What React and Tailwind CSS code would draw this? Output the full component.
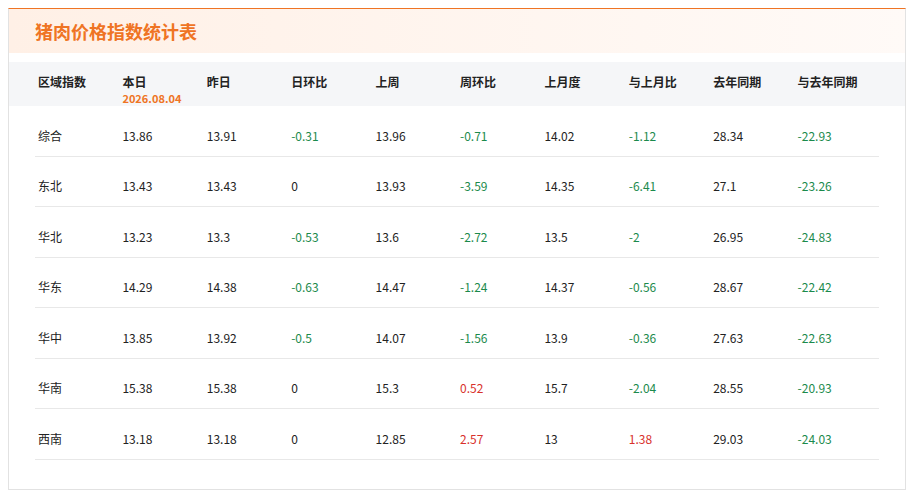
import React from 'react';

const cols = ['区域指数', '本日', '昨日', '日环比', '上周', '周环比', '上月度', '与上月比', '去年同期', '与去年同期'];

const rows = [
  ['综合', '13.86', '13.91', '-0.31', '13.96', '-0.71', '14.02', '-1.12', '28.34', '-22.93'],
  ['东北', '13.43', '13.43', '0', '13.93', '-3.59', '14.35', '-6.41', '27.1', '-23.26'],
  ['华北', '13.23', '13.3', '-0.53', '13.6', '-2.72', '13.5', '-2', '26.95', '-24.83'],
  ['华东', '14.29', '14.38', '-0.63', '14.47', '-1.24', '14.37', '-0.56', '28.67', '-22.42'],
  ['华中', '13.85', '13.92', '-0.5', '14.07', '-1.56', '13.9', '-0.36', '27.63', '-22.63'],
  ['华南', '15.38', '15.38', '0', '15.3', '0.52', '15.7', '-2.04', '28.55', '-20.93'],
  ['西南', '13.18', '13.18', '0', '12.85', '2.57', '13', '1.38', '29.03', '-24.03'],
];

// change columns get coloured: green when falling, red when rising
const changeCols = [3, 5, 7, 9];

const cellColor = (i, v) => {
  if (!changeCols.includes(i)) return 'text-[#222222]';
  const n = parseFloat(v);
  if (n < 0) return 'text-[#1b8a4c]';
  if (n > 0) return 'text-[#d8312b]';
  return 'text-[#222222]';
};

const App = () => {
  return (
    <div className="w-[913px] h-[498px] bg-white font-['Noto_Sans_CJK_SC','Noto_Sans',sans-serif]">
      <div className="ml-[8px] mt-[8px] w-[898px] h-[482px] border border-[#e2e2e2] border-t-[#ef7424] bg-white">
        <div className="h-[44px] flex items-center pl-[26px] bg-gradient-to-r from-[#fff0e6] to-[#fffaf7]">
          <h1 className="text-[18px] font-bold text-[#ef7424] leading-none">猪肉价格指数统计表</h1>
        </div>

        <div className="mt-[9px] h-[44px] bg-[#f5f6f8]">
          <div className="mx-[26px] grid grid-cols-10 pt-[12px]">
            {cols.map((c, i) => (
              <div key={c} className="px-[3px]">
                <div className="text-[12px] font-bold text-[#222222] leading-[16px]">{c}</div>
                {i === 1 && (
                  <div className="text-[11px] font-bold text-[#ef7424] leading-[14px] mt-[1px]">2026.08.04</div>
                )}
              </div>
            ))}
          </div>
        </div>

        <div className="mx-[26px]">
          {rows.map((r) => (
            <div key={r[0]} className="grid grid-cols-10 pt-[19.5px] pb-[10px] border-b border-[#e8e8e8]">
              {r.map((v, i) => (
                <div key={i} className={`px-[3px] text-[12px] leading-[20px] ${cellColor(i, v)}`}>
                  {v}
                </div>
              ))}
            </div>
          ))}
        </div>
      </div>
    </div>
  );
};

export default App;
